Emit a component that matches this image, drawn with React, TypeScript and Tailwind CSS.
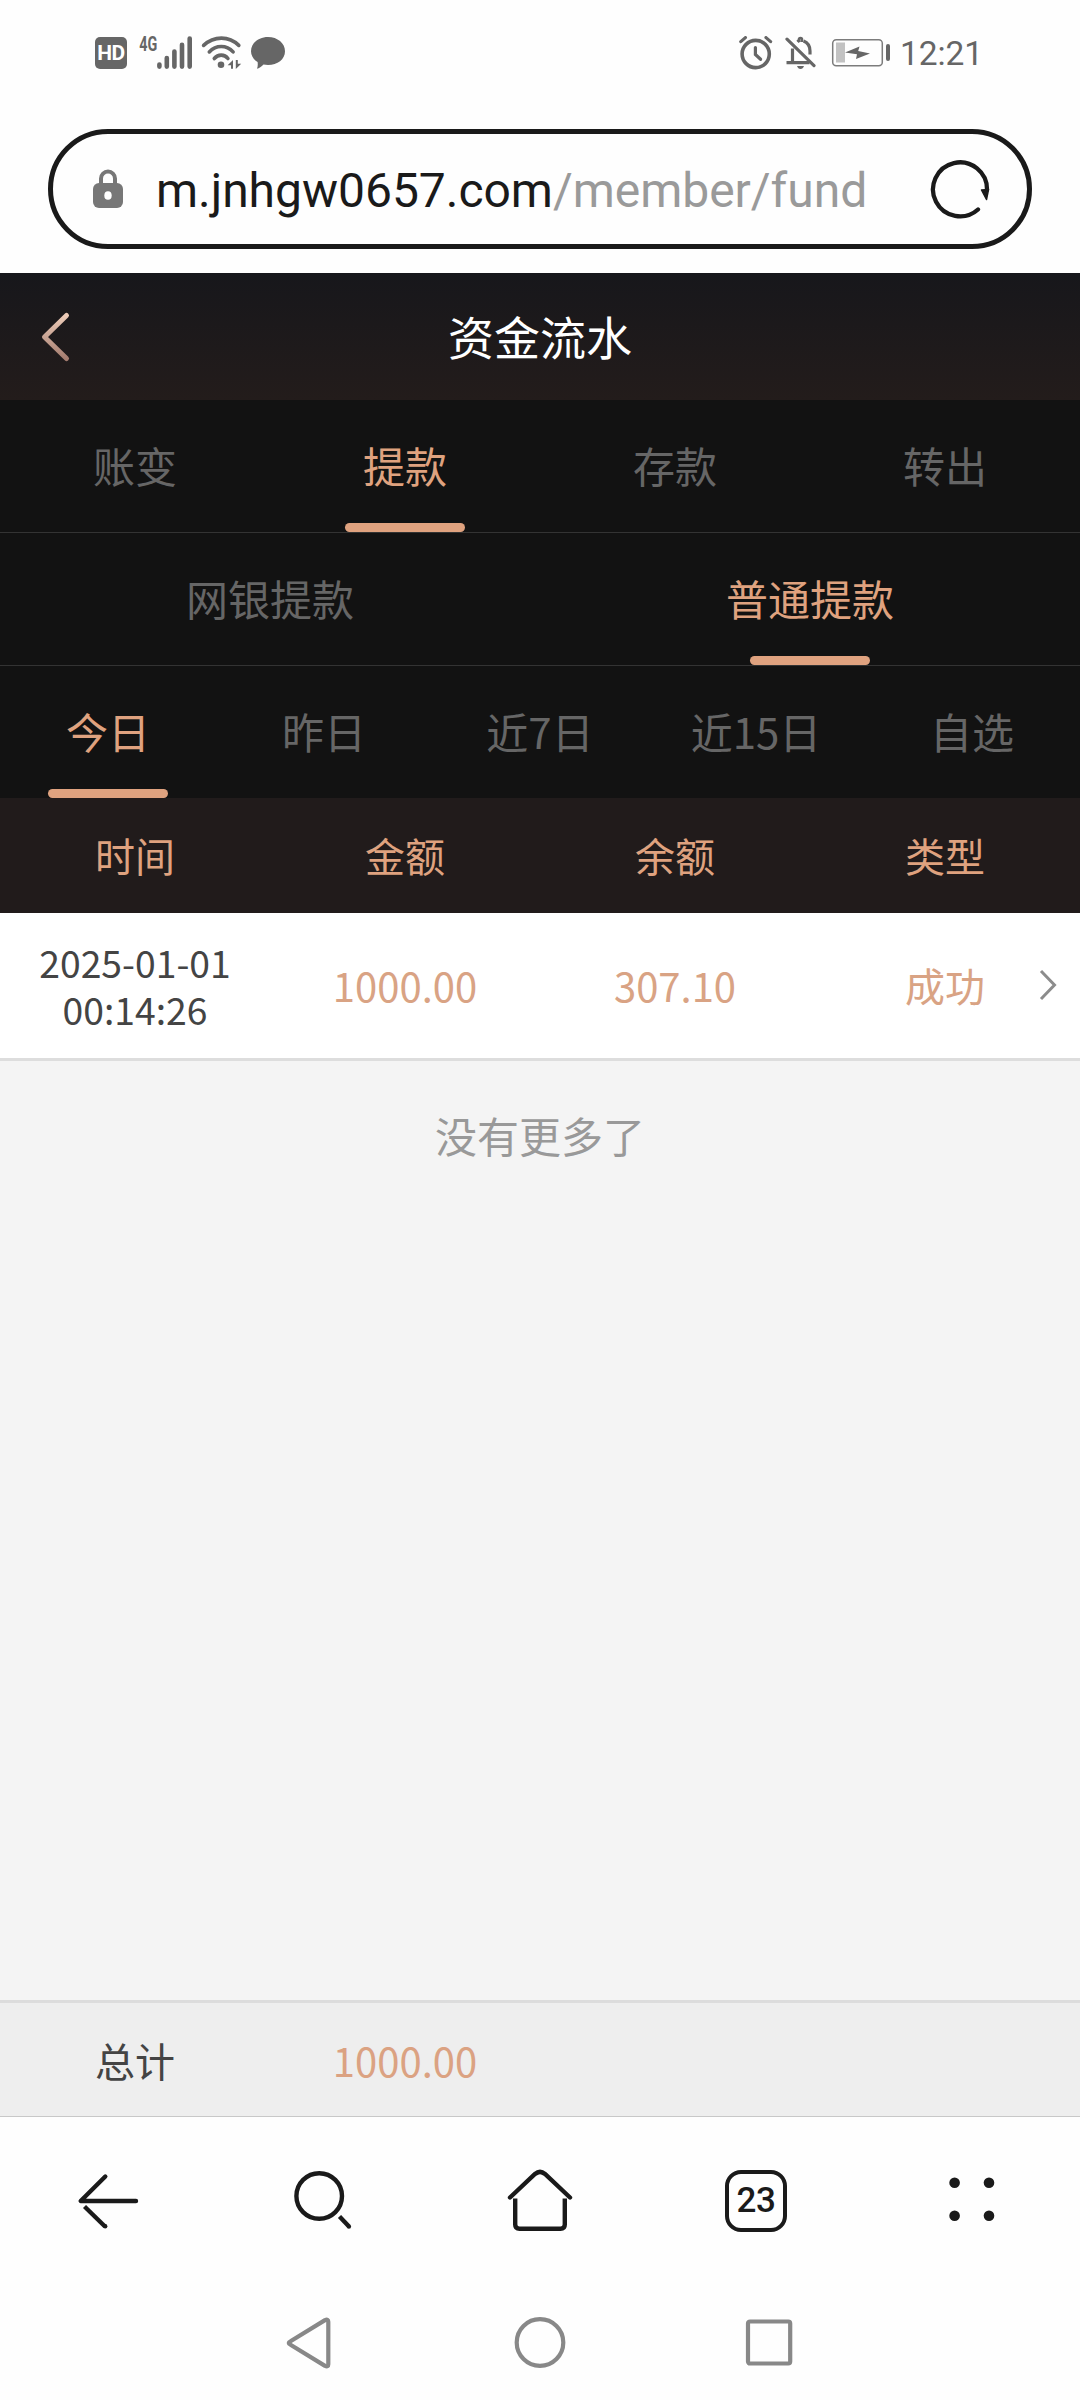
import { useState } from "react";
import clsx from "clsx";

type Tab = { id: string; label: string };

const typeTabs: Tab[] = [
  { id: "change", label: "账变" },
  { id: "withdraw", label: "提款" },
  { id: "deposit", label: "存款" },
  { id: "transfer", label: "转出" },
];

const methodTabs: Tab[] = [
  { id: "bank", label: "网银提款" },
  { id: "normal", label: "普通提款" },
];

const rangeTabs: Tab[] = [
  { id: "today", label: "今日" },
  { id: "yesterday", label: "昨日" },
  { id: "7d", label: "近7日" },
  { id: "15d", label: "近15日" },
  { id: "custom", label: "自选" },
];

const columns = ["时间", "金额", "余额", "类型"];

const records = [
  { date: "2025-01-01", time: "00:14:26", amount: "1000.00", balance: "307.10", status: "成功" },
];

function StatusBar() {
  return (
    <div className="flex h-[106px] items-center justify-between pl-[95px] pr-[97px] text-[#666666]">
      <div className="flex items-center">
        <div className="flex h-8 w-8 items-center justify-center rounded-[5px] bg-[#666666] font-[Roboto,sans-serif] text-[21px] font-bold leading-none tracking-[-0.5px] text-white">
          HD
        </div>
        <svg className="ml-3 h-[46px] w-[54px]" viewBox="139 30 54 46">
          <text x="139.2" y="50.8" fontSize="19.5" fontWeight="700" fontFamily="Roboto, sans-serif" textLength="18" lengthAdjust="spacingAndGlyphs" fill="#666666">
            4G
          </text>
          <g stroke="#666666" strokeWidth="4.6" strokeLinecap="round">
            <path d="M159.4 64.6v2M166.8 58v8.6M174.4 51.5v15.1M182 44.8v21.8M189.7 38.5v28.1" />
          </g>
        </svg>
        <svg className="ml-2 h-[34px] w-[41px]" viewBox="201 36 41 34">
          <g fill="none" stroke="#666666" strokeWidth="3.6" strokeLinecap="round">
            <path d="M203.6 45.4C214 35.700 229 35.700 238.800 45.400" />
            <path d="M209.300 51.900C216 44.700 226.500 44.700 233.100 51.900" />
            <path d="M214.300 58.500C218 54 224.500 54 227.900 58.500" />
          </g>
          <circle cx="221" cy="64.800" r="3.300" fill="#666666" />
          <path d="M233 60v8.800h-2v-3.600h-3.400zM235.800 60h2v3.800h3.400l-5.400 5.200z" fill="#666666" />
        </svg>
        <svg className="ml-2 h-[34px] w-[36px]" viewBox="250 36 36 34">
          <path d="M268 37c9.500 0 17 6.200 17 14.200S277.500 65 268 65c-1.600 0-3.100-.2-4.500-.5-2 2.300-4.500 3.800-6.500 4.300.7-1.700 1-4 .6-6.700-4-2.600-6.600-6.500-6.600-10.900C251 43.200 258.500 37 268 37z" fill="#666666" />
        </svg>
      </div>
      <div className="flex items-center">
        <svg className="h-[34px] w-[34px]" viewBox="739 36 34 34" fill="none" stroke="#666666" strokeLinecap="round">
          <circle cx="755.700" cy="54" r="13.600" strokeWidth="3.600" />
          <path d="M740.800 41.600l4.600-4M766 37.600l4.600 4" strokeWidth="3.200" />
          <path d="M755.400 47.500v7l5.200 4.800" strokeWidth="3.200" />
        </svg>
        <svg className="ml-3 h-[34px] w-[32px]" viewBox="785 36 32 34" fill="none" stroke="#666666" strokeWidth="3.200">
          <path d="M787 39.200L814 65.600" strokeLinecap="round" />
          <path d="M792.500 48.500v13M786.500 62.600h23" />
          <path d="M797.500 41.800q1-1 2.600-1.500M803.500 41q6.500 2.500 6.500 10v3.500" />
          <path d="M799 42v-2.500a1.500 1.500 0 0 1 3 0V42" strokeWidth="2.600" />
          <path d="M797 66h7q-1 3-3.500 3t-3.500-3z" fill="#666666" stroke="none" />
        </svg>
        <svg className="ml-[14px] h-[30px] w-[60px]" viewBox="831 38 60 30">
          <rect x="832.700" y="39.700" width="49.600" height="26" rx="3.500" fill="none" stroke="#7c7c7c" strokeWidth="1.500" />
          <rect x="836" y="42.500" width="9" height="20" fill="#c2c2c2" />
          <path d="M845 52.600l14.500-6.200-1.300 4.600 11.800 2.400-14 5.600 1-4.700z" fill="#666666" />
          <rect x="886" y="44" width="4" height="17" rx="2" fill="#666666" />
        </svg>
        <span className="ml-[9px] pt-px font-[Roboto,sans-serif] text-[33.5px] leading-none tracking-[-0.1px]">12:21</span>
      </div>
    </div>
  );
}

function AddressBar() {
  return (
    <div className="h-[167px] px-12 pt-[23px]">
      <div className="flex h-[120px] items-center rounded-full border-[5px] border-[#1a1a1a] pl-10 pr-[37px]">
        <svg className="h-10 w-[30px]" viewBox="0 0 30 40">
          <path d="M8 17V9.500a7 7 0 0 1 14 0V17" fill="none" stroke="#777777" strokeWidth="4" />
          <rect y="14" width="30" height="25" rx="6" fill="#777777" />
          <ellipse cx="15" cy="26.500" rx="3.700" ry="4.300" fill="#fff" />
        </svg>
        <div className="ml-[33px] flex-1 whitespace-nowrap pt-[3px] font-[Roboto,sans-serif] text-[48px] leading-[60px] tracking-[-0.03px] text-[#1a1a1a]">
          m.jnhgw0657.com<span className="text-[#9a9a9a]">/member/fund</span>
        </div>
        <svg className="h-[60px] w-[60px]" viewBox="930 159 60 60">
          <path d="M978 209.500A27 27 0 1 1 987 190" fill="none" stroke="#1a1a1a" strokeWidth="4.300" strokeLinecap="round" />
          <path d="M981.500 190l7-.5-2 10z" fill="#1a1a1a" stroke="#1a1a1a" strokeWidth="1.500" strokeLinejoin="round" />
        </svg>
      </div>
    </div>
  );
}

function TabRow({ tabs, initial, last }: { tabs: Tab[]; initial: string; last?: boolean }) {
  const [active, setActive] = useState(initial);

  return (
    <div className={clsx("flex bg-[#121212]", last ? "h-[132px]" : "h-[133px] border-b border-[#333333]")}>
      {tabs.map((tab) => (
        <button
          key={tab.id}
          onClick={() => setActive(tab.id)}
          className={clsx(
            "relative flex flex-1 items-center justify-center pb-[2px] text-[42px] leading-none",
            active === tab.id ? "text-[#dfa27f]" : "text-[#666666]"
          )}
        >
          {tab.label}
          {active === tab.id && (
            <span className="absolute bottom-0 left-1/2 h-[9px] w-[120px] -translate-x-1/2 rounded-full bg-[#dfa27f]" />
          )}
        </button>
      ))}
    </div>
  );
}

function BrowserNav() {
  return (
    <div className="grid h-[168px] grid-cols-5 place-items-center text-[#1a1a1a]">
      <svg className="h-16 w-16" viewBox="76 2169 64 64" fill="none" stroke="currentColor" strokeWidth="4.400">
        <path d="M105.300 2176.500L80.700 2201H136" strokeLinecap="round" strokeLinejoin="round" />
        <path d="M84.500 2206.500l20.500 20" />
        <circle cx="105.200" cy="2226.200" r="2.200" fill="currentColor" stroke="none" />
      </svg>
      <svg className="h-16 w-16" viewBox="292 2169 64 64" fill="none" stroke="currentColor" strokeWidth="4.400">
        <circle cx="319.200" cy="2196" r="22.800" />
        <path d="M339.500 2216.500l9.500 10" />
        <circle cx="348.900" cy="2226.600" r="2.200" fill="currentColor" stroke="none" />
      </svg>
      <svg className="h-16 w-[68px]" viewBox="506 2169 68 64" fill="none" stroke="currentColor" strokeWidth="4.400">
        <path d="M510 2197.500l25-23.500q5-4.200 10 0l25 23.500" strokeLinecap="round" />
        <path d="M515.200 2198.500v26q0 4.300 4.300 4.300h41q4.300 0 4.300-4.300v-26" />
      </svg>
      <div className="flex h-[62px] w-[62px] items-center justify-center rounded-[16px] border-4 border-[#1a1a1a] pb-px font-[Roboto,sans-serif] text-[35px] font-medium leading-none tracking-[-0.5px]">
        23
      </div>
      <svg className="h-16 w-16" viewBox="940 2169 64 64" fill="currentColor">
        <circle cx="954.600" cy="2182.700" r="5.300" />
        <circle cx="989" cy="2182.700" r="5.300" />
        <circle cx="954.600" cy="2215.800" r="5.300" />
        <circle cx="989" cy="2215.800" r="5.300" />
      </svg>
    </div>
  );
}

function SystemNav() {
  return (
    <div className="flex h-[115px] items-center justify-center gap-[178px] pr-px text-[#888888]">
      <svg className="h-[52px] w-[52px]" viewBox="284 2316 52 52" fill="none" stroke="currentColor" strokeWidth="4.200" strokeLinejoin="round">
        <path d="M290.500 2340.300q-3.500 1.700 0 3.400l34.500 21.200q3.300 1.500 3.300-1.700v-42.400q0-3.200-3.300-1.700z" />
      </svg>
      <svg className="h-[52px] w-[52px]" viewBox="0 0 52 52" fill="none" stroke="currentColor" strokeWidth="4.200">
        <circle cx="26" cy="25.500" r="23.300" />
      </svg>
      <svg className="h-[52px] w-[52px]" viewBox="0 0 52 52" fill="none" stroke="currentColor" strokeWidth="4.200">
        <rect x="4" y="4.500" width="42.200" height="42" rx="2" />
      </svg>
    </div>
  );
}

export default function App() {
  return (
    <div className="flex h-[2400px] w-[1080px] flex-col overflow-hidden bg-[#fefefe] font-['Noto_Sans_CJK_SC',sans-serif]">
      <StatusBar />
      <AddressBar />

      <header className="grid h-[127px] grid-cols-3 items-center bg-linear-to-b from-[#17171b] to-[#231c1b]">
        <svg className="ml-[38px] h-[54px] w-9" viewBox="38 310 36 54" fill="none">
          <defs>
            <linearGradient id="back" x1="0" y1="0" x2="0" y2="1">
              <stop offset="0" stopColor="#eccbb8" />
              <stop offset="1" stopColor="#a57d70" />
            </linearGradient>
          </defs>
          <path d="M66.500 315.500L44.500 337l22 21.500" stroke="url(#back)" strokeWidth="5" strokeLinecap="round" strokeLinejoin="round" />
        </svg>
        <h1 className="pb-[4px] text-center text-[46px] leading-none text-white">资金流水</h1>
      </header>

      <TabRow tabs={typeTabs} initial="withdraw" />
      <TabRow tabs={methodTabs} initial="normal" />
      <TabRow tabs={rangeTabs} initial="today" last />

      <div className="grid h-[115px] grid-cols-4 items-center bg-[#211b1b] pb-px text-center text-[40px] leading-none text-[#dfa27f]">
        {columns.map((col) => (
          <div key={col}>{col}</div>
        ))}
      </div>

      <main className="flex-1 bg-[#f4f4f4]">
        {records.map((record) => (
          <div
            key={record.date + record.time}
            className="relative grid h-[148px] grid-cols-4 items-center border-b-[3px] border-[#dddddd] bg-white text-center text-[40px] leading-none text-[#d9a384]"
          >
            <div className="text-[37.300px] leading-[46.500px] text-[#444444]">
              {record.date}
              <br />
              {record.time}
            </div>
            <div className="pb-px">{record.amount}</div>
            <div className="pb-px">{record.balance}</div>
            <div className="pb-px">{record.status}</div>
            <svg className="absolute right-[22px] top-[55px] h-[34px] w-5" viewBox="0 0 20 34" fill="none">
              <path d="M3 3l13.500 14L3 31" stroke="#8c8c8c" strokeWidth="3" />
            </svg>
          </div>
        ))}
        <p className="pt-[53px] text-center text-[42px] leading-none text-[#999999]">没有更多了</p>
      </main>

      <footer className="grid h-[117px] grid-cols-4 items-center border-b border-t-[3px] border-b-[#c8c8c8] border-t-[#dcdcdc] bg-[#eeeeee] text-center text-[40px] leading-none text-[#444444]">
        <div>总计</div>
        <div className="text-[#dba282]">1000.00</div>
      </footer>

      <BrowserNav />
      <SystemNav />
    </div>
  );
}
